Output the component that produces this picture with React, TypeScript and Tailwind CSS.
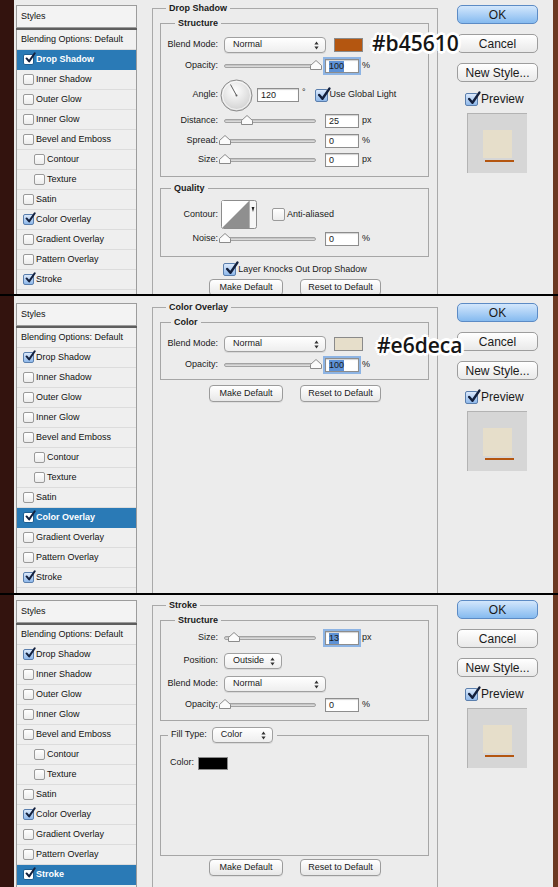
import React from "react";

type Kids = { children?: React.ReactNode };

const STYLES: { name: string; on: boolean; indent?: boolean }[] = [
  { name: "Drop Shadow", on: true },
  { name: "Inner Shadow", on: false },
  { name: "Outer Glow", on: false },
  { name: "Inner Glow", on: false },
  { name: "Bevel and Emboss", on: false },
  { name: "Contour", on: false, indent: true },
  { name: "Texture", on: false, indent: true },
  { name: "Satin", on: false },
  { name: "Color Overlay", on: true },
  { name: "Gradient Overlay", on: false },
  { name: "Pattern Overlay", on: false },
  { name: "Stroke", on: true },
];

function Check({ on, big, light }: { on?: boolean; big?: boolean; light?: boolean }) {
  const box = big ? "w-[13px] h-[13px]" : "w-[11px] h-[11px]";
  const skin = light
    ? "border-[#1d5e91] bg-white"
    : on
      ? "border-[#5b7fad] bg-gradient-to-b from-[#dbe9fb] to-[#8fb8ea]"
      : "border-[#9a9a9a] bg-gradient-to-b from-white to-[#ececec]";
  return (
    <span className={`relative shrink-0 rounded-[2px] border ${box} ${skin}`}>
      {on && (
        <svg
          className="absolute -top-[3px] left-0"
          width={big ? 15 : 12}
          height={big ? 15 : 12}
          viewBox="0 0 14 14"
        >
          <path
            d="M3 7.5 L6 11 L12.5 1.5"
            fill="none"
            stroke="#13203d"
            strokeWidth="2.3"
            strokeLinecap="round"
            strokeLinejoin="round"
          />
        </svg>
      )}
    </span>
  );
}

function Slider({ at }: { at: number }) {
  return (
    <div className="relative w-[92px] h-[4px] shrink-0 rounded-full border border-[#a3a3a3] bg-gradient-to-b from-[#bcbcbc] to-[#e4e4e4]">
      <svg className="absolute -top-[5px]" style={{ left: at - 7 }} width="12" height="10" viewBox="0 0 12 10">
        <path d="M0.5 9.5 V5.5 L6 0.5 L11.5 5.5 V9.5 Z" fill="#fbfbfb" stroke="#8b8b8b" />
      </svg>
    </div>
  );
}

function Field({ v, sel, wide }: { v: string; sel?: boolean; wide?: boolean }) {
  return (
    <div
      className={`h-[14px] shrink-0 flex items-center border border-[#8d8d8d] bg-white pl-[3px] shadow-[inset_0_1px_1px_rgba(0,0,0,0.18)] ${wide ? "w-[42px]" : "w-[34px]"} ${sel ? "ring-2 ring-[#8db4e4]" : ""}`}
    >
      <span className={`leading-[11px] ${sel ? "bg-[#5e92d6]" : ""}`}>{v}</span>
    </div>
  );
}

function Select({ label, w }: { label: string; w: string }) {
  return (
    <div
      className={`flex items-center justify-between h-[16px] shrink-0 rounded-[4px] border border-[#a0a0a0] bg-gradient-to-b from-white to-[#eeeeee] pl-[8px] pr-[6px] shadow-[0_1px_0_rgba(0,0,0,0.08)] ${w}`}
    >
      <span>{label}</span>
      <svg width="5" height="9" viewBox="0 0 5 9">
        <path d="M2.5 0.5 L4.6 3.4 H0.4 Z M2.5 8.5 L4.6 5.6 H0.4 Z" fill="#333" />
      </svg>
    </div>
  );
}

function Btn({ w, children }: { w: string } & Kids) {
  return (
    <div
      className={`h-[17px] flex items-center justify-center rounded-[4px] border border-[#9b9b9b] bg-gradient-to-b from-white to-[#e8e8e8] shadow-[0_1px_0_rgba(0,0,0,0.06)] ${w}`}
    >
      {children}
    </div>
  );
}

function BigBtn({ ok, children }: { ok?: boolean } & Kids) {
  return (
    <div
      className={`w-[81px] h-[19px] flex items-center justify-center rounded-[5px] border text-[12px] leading-none ${ok ? "border-[#5c8bc5] bg-gradient-to-b from-[#d3e7fc] to-[#85baef]" : "border-[#9d9d9d] bg-gradient-to-b from-white to-[#e9e9e9]"}`}
    >
      {children}
    </div>
  );
}

function Label({ children }: Kids) {
  return <span className="w-[57px] shrink-0 text-right">{children}</span>;
}

function Swatch({ color }: { color: string }) {
  return <span className={`ml-[8px] w-[29px] h-[14px] shrink-0 border border-[#8a8a8a] ${color}`} />;
}

function Dial() {
  return (
    <svg width="33" height="33" viewBox="0 0 33 33" className="shrink-0">
      <defs>
        <radialGradient id="dial" cx="45%" cy="35%" r="70%">
          <stop offset="0" stopColor="#ffffff" />
          <stop offset="1" stopColor="#cdcdcd" />
        </radialGradient>
      </defs>
      <circle cx="16.5" cy="16.5" r="15.5" fill="url(#dial)" stroke="#8a8a8a" />
      <circle cx="16.5" cy="16.5" r="14" fill="none" stroke="#ffffff" strokeOpacity="0.7" />
      <line x1="16.5" y1="16.5" x2="10.5" y2="5.5" stroke="#5f5f5f" />
      <circle cx="16.5" cy="16.5" r="1" fill="#5f5f5f" />
    </svg>
  );
}

function ContourThumb() {
  return (
    <svg width="36" height="29" viewBox="0 0 36 29" className="shrink-0">
      <rect x="0.5" y="0.5" width="35" height="28" rx="2" fill="#f6f6f6" stroke="#8c8c8c" />
      <rect x="1" y="1" width="27" height="27" fill="#ffffff" />
      <path d="M1 28 L28 1 V28 Z" fill="#8f8f8f" />
      <line x1="28.5" y1="1" x2="28.5" y2="28" stroke="#b3b3b3" />
      <path d="M30.6 7 H33.4 L32 12 Z" fill="#222" />
    </svg>
  );
}

function Group({ title, cls, lg, children }: { title: React.ReactNode; cls: string; lg: string } & Kids) {
  return (
    <fieldset className={`border border-[#a6a6a6] ${cls}`}>
      <legend className={`px-[3px] font-bold leading-[11px] ${lg}`}>{title}</legend>
      {children}
    </fieldset>
  );
}

function Buttons({ top }: { top: string }) {
  return (
    <div className={`flex justify-center gap-[17px] ${top}`}>
      <Btn w="w-[74px]">Make Default</Btn>
      <Btn w="w-[81px]">Reset to Default</Btn>
    </div>
  );
}

function StyleList({ active, top }: { active: string; top: string }) {
  return (
    <div className={`ml-[2px] w-[121px] h-[400px] shrink-0 flex flex-col text-[#111] ${top}`}>
      <div className="h-[23px] flex items-center border border-[#9c9c9c] bg-[#f3f3f3] pl-[4px]">Styles</div>
      <div className="h-[2px] bg-[#5e5e5e]" />
      <div className="flex-1 border-x border-[#9c9c9c] bg-[#ededed]">
        <div className="h-[20px] flex items-center border-b border-[#dadada] bg-[#f1f1f1] pl-[4px]">
          Blending Options: Default
        </div>
        {STYLES.map((s) => {
          const sel = s.name === active;
          return (
            <div
              key={s.name}
              className={`h-[20px] flex items-center gap-[2px] border-b ${s.indent ? "pl-[17px]" : "pl-[6px]"} ${sel ? "bg-[#2a7ab6] border-[#2a7ab6] text-white font-bold" : "bg-[#efefef] border-[#dcdcdc]"}`}
            >
              <Check on={s.on} light={sel} />
              <span>{s.name}</span>
            </div>
          );
        })}
      </div>
    </div>
  );
}

function RightCol({ top }: { top: string }) {
  return (
    <div className={`ml-[19px] w-[81px] shrink-0 flex flex-col ${top}`}>
      <BigBtn ok>OK</BigBtn>
      <div className="mt-[10px]">
        <BigBtn>Cancel</BigBtn>
      </div>
      <div className="mt-[10px]">
        <BigBtn>New Style...</BigBtn>
      </div>
      <div className="mt-[10px] ml-[8px] h-[14px] flex items-center gap-[3px] text-[12px]">
        <Check on big />
        <span>Preview</span>
      </div>
      <div className="ml-[10px] mt-[7px] w-[60px] h-[60px] border-t border-l border-[#b3b3b3] bg-[#d6d6d6] pt-[16px] pl-[15px]">
        <div className="w-[29px] h-[28px] bg-[#e6deca]" />
        <div className="ml-[2px] mt-[2px] w-[29px] h-[2px] bg-[#b45610]" />
      </div>
    </div>
  );
}

function Note({ text, pos }: { text: string; pos: string }) {
  return (
    <span
      className={`absolute font-['Open_Sans',sans-serif] font-semibold text-[21px] leading-none text-[#151515] [text-shadow:0_0_2px_#fff,2px_2px_0_#fff,-2px_-2px_0_#fff,2px_-2px_0_#fff,-2px_2px_0_#fff,0_3px_0_#fff,0_-3px_0_#fff,3px_0_0_#fff,-3px_0_0_#fff] ${pos}`}
    >
      {text}
    </span>
  );
}

function Panel({
  h,
  top,
  mainTop,
  active,
  title,
  note,
  children,
}: { h: string; top: string; mainTop: string; active: string; title: string; note?: React.ReactNode } & Kids) {
  return (
    <div className={`relative flex items-start overflow-hidden bg-[#ececec] ${h}`}>
      <div className="w-[14px] h-full shrink-0 bg-[#33130e]" />
      <StyleList active={active} top={top} />
      <fieldset className={`ml-[15px] w-[286px] h-[400px] shrink-0 border border-[#a9a9a9] ${mainTop}`}>
        <legend className="ml-[13px] px-[3px] font-bold leading-[11px]">{title}</legend>
        {children}
      </fieldset>
      <RightCol top={top} />
      <div className="flex-1" />
      <div className="w-[5px] h-full shrink-0 bg-[#6b3821]" />
      {note}
    </div>
  );
}

export default function App() {
  return (
    <div className="w-[558px] h-[887px] overflow-hidden bg-black font-['Liberation_Sans',Arial,sans-serif] text-[9px] text-[#1a1a1a]">
      <Panel
        h="h-[294px]"
        top="mt-[5px]"
        mainTop="mt-[3px]"
        active="Drop Shadow"
        title="Drop Shadow"
        note={<Note text="#b45610" pos="left-[372px] top-[33px]" />}
      >
        <Group title="Structure" cls="ml-[7px] mt-[4px] w-[269px] pb-[9px]" lg="ml-[14px]">
          <div className="mt-[8px] h-[16px] flex items-center">
            <Label>Blend Mode:</Label>
            <div className="ml-[6px]">
              <Select label="Normal" w="w-[102px]" />
            </div>
            <Swatch color="bg-[#b45610]" />
          </div>
          <div className="mt-[6px] h-[14px] flex items-center">
            <Label>Opacity:</Label>
            <div className="ml-[6px]">
              <Slider at={92} />
            </div>
            <div className="ml-[9px]">
              <Field v="100" sel />
            </div>
            <span className="ml-[3px]">%</span>
          </div>
          <div className="mt-[6px] h-[32px] flex items-center">
            <Label>Angle:</Label>
            <div className="ml-[2px]">
              <Dial />
            </div>
            <div className="ml-[4px]">
              <Field v="120" wide />
            </div>
            <span className="ml-[3px] self-start mt-[7px]">°</span>
            <div className="ml-[9px] flex items-center gap-[2px]">
              <Check on big />
              <span>Use Global Light</span>
            </div>
          </div>
          <div className="mt-[3px] h-[14px] flex items-center">
            <Label>Distance:</Label>
            <div className="ml-[6px]">
              <Slider at={23} />
            </div>
            <div className="ml-[9px]">
              <Field v="25" />
            </div>
            <span className="ml-[3px]">px</span>
          </div>
          <div className="mt-[6px] h-[14px] flex items-center">
            <Label>Spread:</Label>
            <div className="ml-[6px]">
              <Slider at={1} />
            </div>
            <div className="ml-[9px]">
              <Field v="0" />
            </div>
            <span className="ml-[3px]">%</span>
          </div>
          <div className="mt-[5px] h-[14px] flex items-center">
            <Label>Size:</Label>
            <div className="ml-[6px]">
              <Slider at={1} />
            </div>
            <div className="ml-[9px]">
              <Field v="0" />
            </div>
            <span className="ml-[3px]">px</span>
          </div>
        </Group>
        <Group title="Quality" cls="ml-[7px] mt-[6px] w-[269px] pb-[10px]" lg="ml-[10px]">
          <div className="mt-[6px] h-[29px] flex items-center">
            <Label>Contour:</Label>
            <div className="ml-[3px]">
              <ContourThumb />
            </div>
            <div className="ml-[15px] flex items-center gap-[2px]">
              <Check big />
              <span>Anti-aliased</span>
            </div>
          </div>
          <div className="mt-[3px] h-[14px] flex items-center">
            <Label>Noise:</Label>
            <div className="ml-[6px]">
              <Slider at={1} />
            </div>
            <div className="ml-[9px]">
              <Field v="0" />
            </div>
            <span className="ml-[3px]">%</span>
          </div>
        </Group>
        <div className="mt-[6px] h-[13px] flex items-center justify-center gap-[2px]">
          <Check on big />
          <span>Layer Knocks Out Drop Shadow</span>
        </div>
        <Buttons top="mt-[3px]" />
      </Panel>

      <div className="h-[2px] bg-black" />

      <Panel
        h="h-[297px]"
        top="mt-[7px]"
        mainTop="mt-[6px]"
        active="Color Overlay"
        title="Color Overlay"
        note={<Note text="#e6deca" pos="left-[377px] top-[39px]" />}
      >
        <Group title="Color" cls="ml-[7px] mt-[4px] w-[269px] pb-[7px]" lg="ml-[10px]">
          <div className="mt-[8px] h-[16px] flex items-center">
            <Label>Blend Mode:</Label>
            <div className="ml-[6px]">
              <Select label="Normal" w="w-[102px]" />
            </div>
            <Swatch color="bg-[#e6deca]" />
          </div>
          <div className="mt-[6px] h-[14px] flex items-center">
            <Label>Opacity:</Label>
            <div className="ml-[6px]">
              <Slider at={92} />
            </div>
            <div className="ml-[9px]">
              <Field v="100" sel />
            </div>
            <span className="ml-[3px]">%</span>
          </div>
        </Group>
        <Buttons top="mt-[5px]" />
      </Panel>

      <div className="h-[2px] bg-black" />

      <Panel h="h-[292px]" top="mt-[5px]" mainTop="mt-[5px]" active="Stroke" title="Stroke">
        <Group title="Structure" cls="ml-[7px] mt-[4px] w-[269px] pb-[8px]" lg="ml-[14px]">
          <div className="mt-[5px] h-[14px] flex items-center">
            <Label>Size:</Label>
            <div className="ml-[6px]">
              <Slider at={10} />
            </div>
            <div className="ml-[9px]">
              <Field v="13" sel />
            </div>
            <span className="ml-[3px]">px</span>
          </div>
          <div className="mt-[8px] h-[16px] flex items-center">
            <Label>Position:</Label>
            <div className="ml-[6px]">
              <Select label="Outside" w="w-[58px]" />
            </div>
          </div>
          <div className="mt-[7px] h-[16px] flex items-center">
            <Label>Blend Mode:</Label>
            <div className="ml-[6px]">
              <Select label="Normal" w="w-[102px]" />
            </div>
          </div>
          <div className="mt-[6px] h-[14px] flex items-center">
            <Label>Opacity:</Label>
            <div className="ml-[6px]">
              <Slider at={1} />
            </div>
            <div className="ml-[9px]">
              <Field v="0" />
            </div>
            <span className="ml-[3px]">%</span>
          </div>
        </Group>
        <fieldset className="ml-[7px] mt-[6px] w-[269px] h-[129px] border border-[#a6a6a6]">
          <legend className="ml-[7px] px-[3px] pr-[4px]">
            <span className="inline-flex items-center h-[16px] gap-[5px]">
              <span>Fill Type:</span>
              <Select label="Color" w="w-[61px]" />
            </span>
          </legend>
          <div className="mt-[14px] ml-[9px] h-[12px] flex items-center gap-[4px]">
            <span>Color:</span>
            <span className="w-[30px] h-[13px] border border-[#8a8a8a] bg-black" />
          </div>
        </fieldset>
        <Buttons top="mt-[3px]" />
      </Panel>
    </div>
  );
}
